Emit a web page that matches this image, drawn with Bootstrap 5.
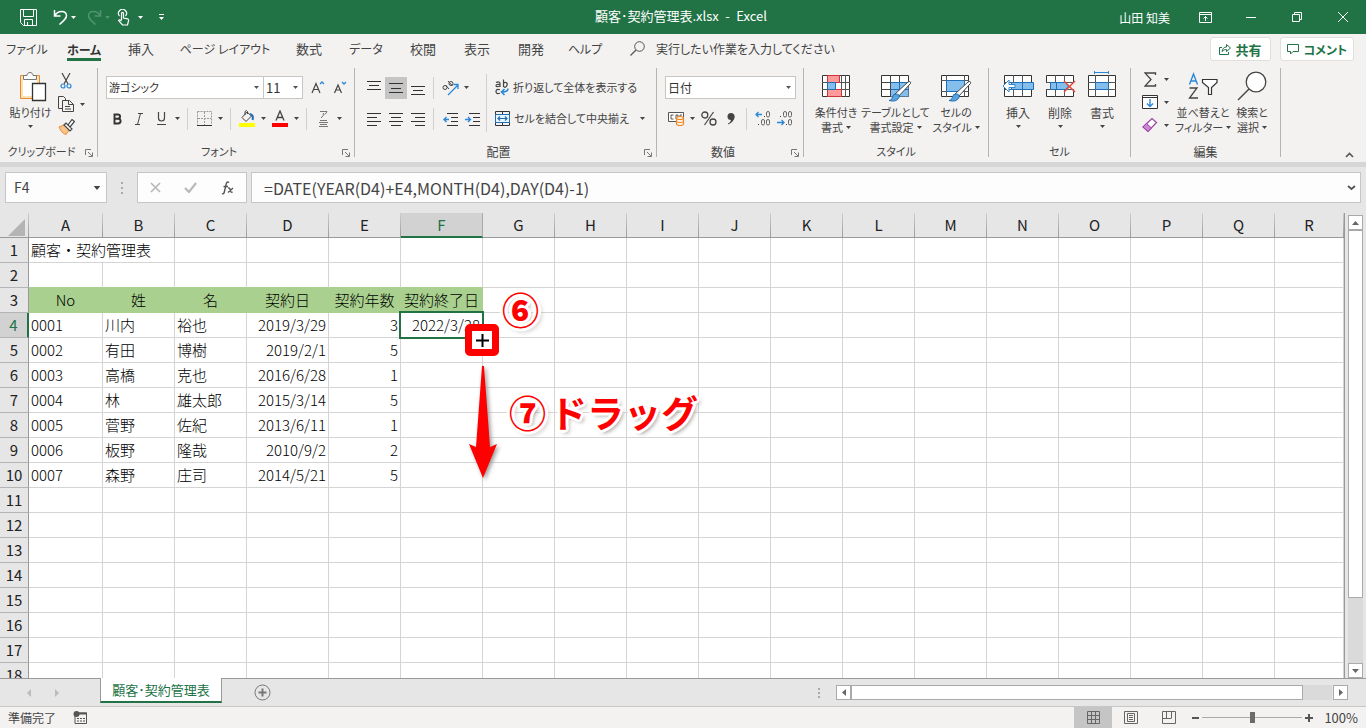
<!DOCTYPE html>
<html lang="ja">
<head>
<meta charset="utf-8">
<meta name="viewport" content="width=device-width, initial-scale=1">
<title>顧客･契約管理表.xlsx - Excel</title>
<link rel="stylesheet" href="https://cdn.jsdelivr.net/npm/bootstrap@5.3.0/dist/css/bootstrap.min.css">
<style>
:root { --xl: #217346; --ink: #444; --line: #d4d4d4; --edge: #999; --pane: #e6e6e6; --chrome: #f3f2f1; }
body { font-family: "Noto Sans CJK JP", sans-serif; font-size: 12px; line-height: 15px; color: var(--ink); font-feature-settings: "palt"; background: var(--pane); }
button, input, select { font: inherit; color: inherit; font-feature-settings: inherit; }
button { border: 0; background: none; padding: 0; }
svg { display: block; flex: none; fill: none; }
a { color: inherit; text-decoration: none; }

.titlebar { display: grid; grid-template-columns: 1fr auto 1fr; height: 34px; flex: none; background: var(--xl); color: #fff; }
.titlebar .win { width: 46px; height: 34px; display: grid; place-items: center; }
.titlebar .quick { padding-left: 20px; }
.file-title { font-size: 13px; margin-right: 4px; line-height: 32px; height: 34px; }

.tabs { height: 32px; flex: none; background: var(--chrome); font-size: 13px; }
.tabs .tab { width: 54px; height: 28px; display: flex; justify-content: center; align-items: center; white-space: nowrap; }
.tabs .tab.mid { width: 60px; }
.tabs .tab.wide { width: 114px; }
.tabs .kana { font-size: 12px; }
.tabs .tab.on { font-weight: 700; color: #333; }
.tabs .tab.on span { border-bottom: 3px solid var(--xl); padding: 3px 0 1px; margin-top: 4px; }
.tell { font-size: 12px; gap: 11px; margin-left: 18px; height: 28px; }
.pill { height: 24px; margin-top: 3px; background: #fff; border: 1px solid #e1dfdd; border-radius: 3px; color: var(--xl); font-weight: 700; font-size: 13px; display: flex; align-items: center; gap: 5px; padding: 0 8px; }
.pill.last { font-size: 12px; margin: 3px 12px 0 9px; padding: 0 6px; }

.ribbon { height: 96px; flex: none; background: var(--chrome); padding-top: 2px; }
.rgroup { height: 89px; border-right: 1px solid #b4b4b4; display: flex; flex-direction: column; flex: none; }
.rgroup .body { flex: 1; display: flex; }
.rgroup footer { height: 16px; display: flex; justify-content: center; align-items: center; position: relative; margin-bottom: -2px; padding-right: 14px; }
.rgroup footer button { position: absolute; right: 4px; bottom: 2px; }
.rgroup footer.plain { padding-right: 0; }
.rgroup .kana { font-size: 11px; }
.g1 { width: 98px; } .g2 { width: 257px; } .g3 { width: 302px; } .g4 { width: 147px; } .g5 { width: 185px; } .g6 { width: 142px; } .g7 { width: 150px; }
.rows { padding: 8px 0 0 8px; white-space: nowrap; }
.toolrow { display: flex; align-items: center; height: 23px; }
.toolrow + .toolrow { margin-top: 8px; }
.tool { width: 22px; height: 22px; display: grid; place-items: center; }
.tool.on { background: #c5c5c5; }
.drop { width: 11px; height: 22px; display: grid; place-items: center; }
.split { width: 1px; height: 22px; background: #d0d0d0; margin: 0 5px 0 4px; }
.split.tall { height: 58px; margin: 6px 8px 0 3px; }
.pick { height: 23px; border: 1px solid #c6c6c6; border-radius: 0; appearance: none; padding: 0 14px 0 2px; color: #333; background: #fff url("data:image/svg+xml,%3Csvg xmlns='http://www.w3.org/2000/svg' width='5' height='3'%3E%3Cpath d='M0 0h5L2.500 3z' fill='%23555'/%3E%3C/svg%3E") no-repeat right 4px center; }
.pick.name { width: 158px; font-size: 11px; } .pick.size { width: 40px; margin-left: -1px; font-size: 13px; } .pick.fmt { width: 131px; }
.big { display: flex; flex-direction: column; align-items: center; padding-top: 3px; white-space: nowrap; }
.big svg.art { margin-bottom: 3px; }
.big .cap { line-height: 15px; display: flex; align-items: center; gap: 3px; }
.big > svg:last-child { margin-top: 5px; }
.w-paste { width: 45px; } .w-cell { width: 42px; } .w-find { width: 44px; } .w-sort { width: 54px; } .w-cond { width: 56px; } .w-style { width: 58px; } .w-table { width: 63px; }
.side { display: flex; flex-direction: column; gap: 1px; }
.side > div { display: flex; height: 22px; align-items: center; }
.g1 .side { padding: 2px 0 0 2px; }

.formula { border-top: 5px solid #d6d6d6; padding: 5px 5px 10px; gap: 4px; height: 51px; }
.fbox { height: 31px; border: 1px solid #c6c6c6; background: #fdfdfd; display: flex; align-items: center; }
.fbox input { border: 0; background: none; outline: 0; min-width: 0; font-size: 16px; color: var(--ink); font-feature-settings: normal; padding: 0; }
.fbox.namebox input { font-size: 14px; }
.namebox { width: 102px; flex: none; } .fxbox { width: 110px; flex: none; }

.sheet { min-height: 0; overflow: hidden; border-right: 1px solid var(--edge); }
.cells { table-layout: fixed; width: 100%; border-collapse: separate; border-spacing: 0; font-size: 15px; line-height: 24px; color: #000; font-feature-settings: normal; }
.cells th { background: var(--pane); font-weight: 400; text-align: center; padding: 0; color: #222; }
.cells thead th { height: 25px; border-bottom: 1px solid var(--edge); border-right: 1px solid; border-image: linear-gradient(#d0d0d0, #999) 1; border-top: 0; border-left: 0; }
.cells tbody th { height: 25px; border-right: 1px solid var(--edge); border-bottom: 1px solid #b4b4b4; }
.cells thead th.on { background: #d2d2d2; color: var(--xl); border-image: none; border-right-color: #aaa; border-bottom: 2px solid var(--xl); line-height: 23px; }
.cells tbody th.on { background: #d2d2d2; color: var(--xl); border-right: 2px solid var(--xl); }
.cells td { height: 25px; padding: 0 2px; background: #fff; border-right: 1px solid var(--line); border-bottom: 1px solid var(--line); white-space: nowrap; font-weight: 300; }
.cells td.hd { background: #a9d08e; border-color: #a9d08e; text-align: center; padding: 0; }
.cells td.above { border-bottom-color: #a9d08e; }
.cells td.num { text-align: right; }
.cells td.active { position: relative; }
.cells td.active::before { content: ""; position: absolute; inset: -2px; border: 2px solid var(--xl); pointer-events: none; }
.corner { width: 17px; height: 17px; margin: 4px 0 0 8px; }

.note { position: absolute; z-index: 2; color: #f00; font-weight: 700; line-height: 40px; font-size: 37px; text-shadow: 3px 0 #fff, -3px 0 #fff, 0 3px #fff, 0 -3px #fff, 2px 2px #fff, -2px 2px #fff, 2px -2px #fff, -2px -2px #fff, 3px 3px 4px #999; font-feature-settings: normal; }
.note.six { left: 101px; top: -24px; font-weight: 900; }
.note.seven { left: 108px; top: 79px; display: flex; gap: 4px; }
.note.seven b { font-weight: 900; }
.grip { position: absolute; z-index: 2; left: 64px; top: 11px; width: 34px; height: 32px; border: 7px solid #f00; border-radius: 5px; background: #fff; display: grid; place-items: center; }
.arrow { position: absolute; z-index: 2; left: 64px; top: 51px; filter: drop-shadow(2px 2px 2px #999); }

.vbar { width: 21px; padding: 2px 3px 0 3px; }
.sbtn { width: 15px; height: 15px; border: 1px solid #aaa; background: #fff; display: grid; place-items: center; flex: none; }
.vtrack { background: #dadada; min-height: 0; }
.vthumb { height: 85%; background: #fff; border: 1px solid #aaa; }
.sheetbar { height: 28px; border-top: 1px solid var(--edge); background: var(--pane); flex: none; }
.sheetbar .arrows { width: 100px; padding-left: 27px; gap: 23px; height: 27px; }
.sheettab { height: 25px; margin-top: -1px; width: 122px; background: #fff; border: 1px solid var(--edge); border-top: 0; border-bottom: 2px solid var(--xl); color: var(--xl); font-size: 13px; }
.hbar { width: 512px; margin-right: 18px; }
.htrack { background: #dadada; height: 15px; margin-right: 1px; }
.hthumb { width: 94%; height: 15px; background: #fff; border: 1px solid #aaa; }
.status { height: 22px; background: var(--chrome); border-top: 1px solid #c6c6c6; flex: none; }
.view { width: 38px; height: 21px; display: grid; place-items: center; }
.view.on { background: #c5c5c5; }
.zoomer { appearance: none; width: 100px; height: 20px; background: linear-gradient(#aaa, #aaa) center / 100% 1px no-repeat; margin: 0 3px; }
.zoomer::-webkit-slider-thumb { appearance: none; width: 5px; height: 11px; background: #6b6b6b; }
.percent { font-size: 13px; margin: 0 8px 0 11px; }
</style>
</head>
<body>
<svg width="0" height="0" class="position-absolute" aria-hidden="true">
  <symbol id="caret" viewBox="0 0 5 3"><path d="M0 0h5L2.500 3z" fill="currentColor"/></symbol>
  <symbol id="launch" viewBox="0 0 8 8"><path d="M.5 6V.5H6M3 3l4 4M7.500 3.500v4h-4" stroke="#777"/></symbol>
</svg>
<div class="vh-100 d-flex flex-column overflow-hidden">

<header class="titlebar align-items-center">
  <div class="quick d-flex align-items-center">
    <button aria-label="上書き保存"><svg width="17" height="17"><path d="M.5.500h16v16H3.500l-3-3zM3.500.500v7h10v-7M4.500 16v-5.500h8V16M7.500 13v3" stroke="#fff"/></svg></button>
    <button class="ms-3" aria-label="元に戻す"><svg width="15" height="16"><path d="M1.500 1v6h6M1.500 7C5 1 13 1 13.500 6.500c0 3-2 4.500-7 9" stroke="#fff" stroke-width="1.500"/></svg></button>
    <button class="drop"><svg width="5" height="3"><use href="#caret"/></svg></button>
    <button class="ms-2" aria-label="やり直し"><svg width="15" height="16"><path d="M13.500 1v6h-6M13.500 7C10 1 2 1 1.500 6.500c0 3 2 4.500 7 9" stroke="#4f9470" stroke-width="1.500"/></svg></button>
    <button class="drop" style="color:#4f9470"><svg width="5" height="3"><use href="#caret"/></svg></button>
    <button class="ms-1" aria-label="タッチ/マウス モードの切り替え"><svg width="14" height="17"><path d="M2.500 7a4 4 0 1 1 6 0M4.500 11V4.500c0-1.500 2-1.500 2 0V9l4 .8q1.500.5 1 2.200l-1 4h-5L1.500 11.500q1-1.500 3 .5" stroke="#fff" stroke-width="1.200"/></svg></button>
    <button class="drop ms-1"><svg width="5" height="3"><use href="#caret"/></svg></button>
    <button class="ms-2 ps-1" aria-label="クイック アクセス ツール バーのカスタマイズ"><svg width="7" height="6"><path d="M1 .5h5" stroke="#fff"/><path d="M1 3h5L3.500 6z" fill="#fff"/></svg></button>
  </div>
  <div class="file-title">顧客･契約管理表.xlsx&ensp;-&ensp;Excel</div>
  <div class="d-flex justify-content-end align-items-center">
    <span class="me-2 pe-1">山田 知美</span>
    <button class="win" aria-label="リボンの表示オプション"><svg width="13" height="11"><path d="M.5.500h12v10H.5zM.5 2.500h12M6.500 9V4.500M4.500 6.500l2-2 2 2" stroke="#fff"/></svg></button>
    <button class="win" aria-label="最小化"><svg width="10" height="1"><path d="M0 .5h10" stroke="#fff"/></svg></button>
    <button class="win" aria-label="元に戻す (縮小)"><svg width="10" height="10"><path d="M.5 2.500h7v7h-7zM2.500 2.500v-2h7v7h-2" stroke="#fff"/></svg></button>
    <button class="win" aria-label="閉じる"><svg width="10" height="10"><path d="M0 0l10 10M10 0L0 10" stroke="#fff"/></svg></button>
  </div>
</header>

<nav class="tabs d-flex align-items-start">
  <a href="#" class="tab kana">ファイル</a>
  <a href="#" class="tab mid kana on"><span>ホーム</span></a>
  <a href="#" class="tab">挿入</a>
  <a href="#" class="tab wide kana">ページ レイアウト</a>
  <a href="#" class="tab">数式</a>
  <a href="#" class="tab mid kana">データ</a>
  <a href="#" class="tab">校閲</a>
  <a href="#" class="tab">表示</a>
  <a href="#" class="tab">開発</a>
  <a href="#" class="tab kana">ヘルプ</a>
  <a href="#" class="tell d-flex align-items-center"><svg width="15" height="15"><circle cx="9.500" cy="5.500" r="4.800" stroke="#555"/><path d="M6 9l-5.500 5.500" stroke="#555" stroke-width="1.200"/></svg>実行したい作業を入力してください</a>
  <button class="pill ms-auto"><svg width="12" height="12"><path d="M3 4.500H.5v7h9V9M3 8.500c.5-3 2-4.500 4.500-4.500V1.500l4 3.500-4 3.500V6.500c-2 0-3 .5-4.500 2z" stroke="#217346"/></svg>共有</button>
  <button class="pill last"><svg width="12" height="11"><path d="M.5.500h11v7H6L3.500 10V7.500h-3z" stroke="#217346"/></svg>コメント</button>
</nav>

<div class="ribbon d-flex position-relative">
  <section class="rgroup g1">
    <div class="body ps-2">
      <button class="big w-paste kana"><svg class="art ms-1" width="28" height="31"><path d="M1.500 4.500h19v23h-19z" fill="#fbe2b5" stroke="#ea8a2a"/><path d="M4 7h14v18H4z" fill="#fff"/><path d="M4.500 8.500v-4h3.500c0-4 6-4 6 0h3.500v4z" fill="#fafafa" stroke="#777"/><path d="M13.500 12.500h13v17h-13z" fill="#fff" stroke="#333" stroke-width="1.300"/></svg>貼り付け<svg width="5" height="3"><use href="#caret"/></svg></button>
      <div class="side">
        <div><button class="tool" aria-label="切り取り"><svg width="12" height="16"><path d="M2 0l6 11M10 0L4 11" stroke="#444" stroke-width="1.200"/><circle cx="3" cy="13" r="2" stroke="#2b88d8" stroke-width="1.200"/><circle cx="9" cy="13" r="2" stroke="#2b88d8" stroke-width="1.200"/></svg></button></div>
        <div><button class="tool" aria-label="コピー"><svg width="16" height="16"><path d="M4.500 12.500h-4V.5h5l2 2v2M4.500 4.500h7l4 4v7h-11zM10.500 4.500v4h5M7 10.500h5M7 13h6" stroke="#444"/></svg></button><button class="drop"><svg width="5" height="3"><use href="#caret"/></svg></button></div>
        <div><button class="tool" aria-label="書式のコピー/貼り付け"><svg width="17" height="16"><path d="M1 8l5-2 5 5-3 4.500c-3-1-5-3-7-7.500z" fill="#f9c58a" stroke="#ea8a2a"/><path d="M6 6l2-2 6 6-2 2zM10 6l4-5.500 2.500 2L12 8" fill="#fff" stroke="#444" stroke-width="1.200"/></svg></button></div>
      </div>
    </div>
    <footer class="kana">クリップボード<button aria-label="クリップボードの詳細"><svg width="8" height="8"><use href="#launch"/></svg></button></footer>
  </section>

  <section class="rgroup g2">
    <div class="body rows d-block">
      <div class="toolrow">
        <select class="pick name" aria-label="フォント"><option>游ゴシック</option></select><select class="pick size" aria-label="フォント サイズ"><option>11</option></select>
        <button class="tool ms-1" aria-label="フォント サイズの拡大"><svg width="14" height="15"><path d="M1 13L5 3.500 9 13M2.500 9.500h5" stroke="#444" stroke-width="1.200"/><path d="M9 4l2-2 2 2" stroke="#2b88d8" stroke-width="1.300"/></svg></button>
        <button class="tool" aria-label="フォント サイズの縮小"><svg width="14" height="15"><path d="M1.500 13L5 5l3.500 8M3 10h4" stroke="#444" stroke-width="1.200"/><path d="M9 2l2 2 2-2" stroke="#2b88d8" stroke-width="1.300"/></svg></button>
      </div>
      <div class="toolrow">
        <button class="tool" aria-label="太字"><svg width="9" height="12"><path d="M1.500 1.500h3c3.500 0 3.500 4.200 0 4.200h-3 3.500c3.500 0 3.500 4.800 0 4.800H1.500z" stroke="#333" stroke-width="1.900"/></svg></button>
        <button class="tool" aria-label="斜体"><svg width="8" height="12"><path d="M3 .5h5M0 11.500h5M5.500.500l-3 11" stroke="#444"/></svg></button>
        <button class="tool" aria-label="下線"><svg width="9" height="13"><path d="M1.500 0v6c0 4 6 4 6 0V0M0 12.500h9" stroke="#444" stroke-width="1.200"/></svg></button>
        <button class="drop"><svg width="5" height="3"><use href="#caret"/></svg></button><i class="split"></i>
        <button class="tool" aria-label="罫線"><svg width="15" height="15"><path d="M.5.500h14v13M.5.500v13M7.500 1v13M1 7.500h13" stroke="#999" stroke-dasharray="2 1"/><path d="M0 14.500h15" stroke="#333"/></svg></button>
        <button class="drop"><svg width="5" height="3"><use href="#caret"/></svg></button><i class="split"></i>
        <button class="tool" aria-label="塗りつぶしの色"><svg width="16" height="17"><path d="M8 2L3 7.500l4 4 5.500-5.500zM6 5V1.500q1.500-2 2.500 0V4" stroke="#444"/><path d="M11 4q4 1 2.500 6" stroke="#1e6fb8" stroke-width="2"/><path d="M0 13h16v4H0z" fill="#ff0"/></svg></button>
        <button class="drop"><svg width="5" height="3"><use href="#caret"/></svg></button>
        <button class="tool" aria-label="フォントの色"><svg width="16" height="17"><path d="M4 10.500L8 1l4 9.500M5.500 7.500h5" stroke="#444" stroke-width="1.300"/><path d="M0 13h16v4H0z" fill="red"/></svg></button>
        <button class="drop"><svg width="5" height="3"><use href="#caret"/></svg></button><i class="split"></i>
        <button class="tool" aria-label="ふりがなの表示"><svg width="9" height="17"><path d="M1 1.500h7q-.5 2-2.500 3M4.500 3q.5 3-2.500 5M1 10.500h7M0 12.500h9M1 14.500h7M0 16.500h9" stroke="#777"/></svg></button>
        <button class="drop"><svg width="5" height="3"><use href="#caret"/></svg></button>
      </div>
    </div>
    <footer class="kana">フォント<button aria-label="フォントの詳細"><svg width="8" height="8"><use href="#launch"/></svg></button></footer>
  </section>

  <section class="rgroup g3">
    <div class="body">
      <div class="rows">
        <div class="toolrow">
          <button class="tool" aria-label="上揃え"><svg width="14" height="16"><path d="M0 1.500h14M2 5.500h10M0 9.500h14" stroke="#333"/></svg></button>
          <button class="tool on" aria-label="上下中央揃え"><svg width="14" height="16"><path d="M0 3.500h14M2 8.500h10M0 12.500h14" stroke="#333"/></svg></button>
          <button class="tool" aria-label="下揃え"><svg width="14" height="16"><path d="M0 6.500h14M2 10.500h10M0 14.500h14" stroke="#333"/></svg></button>
          <i class="split"></i>
          <button class="tool" aria-label="方向"><svg width="17" height="16"><circle cx="3" cy="7.500" r="2" stroke="#444"/><path d="M3.500 5l3.500 4M6 1l4.500 5" stroke="#444"/><circle cx="9" cy="3.500" r="2" stroke="#444"/><path d="M6 15l10-10M11.500 4.500H16V9" stroke="#2b88d8" stroke-width="1.300"/></svg></button>
          <button class="drop"><svg width="5" height="3"><use href="#caret"/></svg></button>
        </div>
        <div class="toolrow">
          <button class="tool" aria-label="左揃え"><svg width="14" height="14"><path d="M0 1.500h14M0 5.500h10M0 9.500h14M0 13.500h10" stroke="#333"/></svg></button>
          <button class="tool" aria-label="中央揃え"><svg width="14" height="14"><path d="M0 1.500h14M2 5.500h10M0 9.500h14M2 13.500h10" stroke="#333"/></svg></button>
          <button class="tool" aria-label="右揃え"><svg width="14" height="14"><path d="M0 1.500h14M4 5.500h10M0 9.500h14M4 13.500h10" stroke="#333"/></svg></button>
          <i class="split"></i>
          <button class="tool" aria-label="インデントを減らす"><svg width="15" height="14"><path d="M4 1.500h11M8 5.500h7M8 9.500h7M4 13.500h11" stroke="#333"/><path d="M6 7.500H1M3.500 5L1 7.500 3.500 10" stroke="#2b88d8" stroke-width="1.400"/></svg></button>
          <button class="tool" aria-label="インデントを増やす"><svg width="15" height="14"><path d="M4 1.500h11M8 5.500h7M8 9.500h7M4 13.500h11" stroke="#333"/><path d="M0 7.500h5M3 5l2.500 2.500L3 10" stroke="#2b88d8" stroke-width="1.400"/></svg></button>
        </div>
      </div>
      <i class="split tall"></i>
      <div class="rows ps-0 kana">
        <button class="toolrow"><svg class="me-1" width="14" height="17"><path d="M1 3.500q4-1.500 4 1V8M5 5.500q-4-.5-4 1.200t4 .3M8.500.500V8M8.500 4.500q1.500-2 3-.8t0 3.500-3 0M5 10.800q-4-1.300-4 1.700t4 1.700" stroke="#444" stroke-width="1.200"/><path d="M13 9.500q0 3.500-6 3.500M9.500 10L6.500 13l3 3" stroke="#2b88d8" stroke-width="1.600"/></svg>折り返して全体を表示する</button>
        <div class="toolrow"><button class="d-flex align-items-center"><svg class="me-1" width="15" height="15"><path d="M.5.500h14v14H.5zM7.500 0v4M7.500 11v4" stroke="#333"/><path d="M.5 3.500h14v8H.5z" fill="#e8f3fc" stroke="#1e6fb8"/><path d="M3 7.500h9M5 5.500l-2 2 2 2M10 5.500l2 2-2 2" stroke="#1e6fb8" stroke-width="1.200"/></svg>セルを結合して中央揃え</button><button class="drop ms-2"><svg width="5" height="3"><use href="#caret"/></svg></button></div>
      </div>
    </div>
    <footer>配置<button aria-label="配置の詳細"><svg width="8" height="8"><use href="#launch"/></svg></button></footer>
  </section>

  <section class="rgroup g4">
    <div class="body rows d-block">
      <div class="toolrow"><select class="pick fmt" aria-label="表示形式"><option>日付</option></select></div>
      <div class="toolrow">
        <button class="tool" aria-label="通貨表示形式"><svg width="17" height="15"><path d="M.5 1.500h15v9H.5z" fill="#fff" stroke="#555"/><path d="M5.500 4H3v4h2.500M8 8V4h2v4M12 8V4h2" stroke="#555"/><path d="M8.500 7v6c0 2 7 2 7 0V7" fill="#fdeede" stroke="#ea8a2a" stroke-width="1.200"/><ellipse cx="12" cy="7" rx="3.500" ry="1.500" fill="#fdeede" stroke="#ea8a2a" stroke-width="1.200"/><path d="M8.500 10c0 2 7 2 7 0" stroke="#ea8a2a"/></svg></button>
        <button class="drop"><svg width="5" height="3"><use href="#caret"/></svg></button>
        <button class="tool" aria-label="パーセント スタイル"><svg width="16" height="15"><circle cx="3.800" cy="4" r="3" stroke="#444" stroke-width="1.300"/><circle cx="12" cy="11" r="3" stroke="#444" stroke-width="1.300"/><path d="M12.500 1l-9 13" stroke="#444" stroke-width="1.200"/></svg></button>
        <button class="tool" aria-label="桁区切りスタイル"><svg width="8" height="12"><circle cx="4" cy="3.500" r="3.500" fill="#444"/><path d="M7.500 3q0 6-6.500 8.500v-1q3-1.500 3-4.500z" fill="#444"/></svg></button>
        <i class="split"></i>
        <button class="tool" aria-label="小数点以下の表示桁数を増やす"><svg width="16" height="15"><path d="M7 3.500H1M3.500 1L1 3.500 3.500 6" stroke="#2b88d8" stroke-width="1.300"/><rect x="11.500" y=".5" width="3" height="5.500" rx="1.500" stroke="#666"/><rect x="6.500" y="8.500" width="3" height="5.500" rx="1.500" stroke="#666"/><rect x="11.500" y="8.500" width="3" height="5.500" rx="1.500" stroke="#666"/><path d="M9 5.500h1M3 13.500h1" stroke="#444"/></svg></button>
        <button class="tool" aria-label="小数点以下の表示桁数を減らす"><svg width="16" height="15"><path d="M0 11.500h7M4.500 9L7 11.500 4.500 14" stroke="#2b88d8" stroke-width="1.300"/><rect x="6.500" y=".5" width="3" height="5.500" rx="1.500" stroke="#666"/><rect x="11.500" y=".5" width="3" height="5.500" rx="1.500" stroke="#666"/><rect x="11.500" y="8.500" width="3" height="5.500" rx="1.500" stroke="#666"/><path d="M3 5.500h1M9 13.500h1" stroke="#444"/></svg></button>
      </div>
    </div>
    <footer>数値<button aria-label="数値の詳細"><svg width="8" height="8"><use href="#launch"/></svg></button></footer>
  </section>

  <section class="rgroup g5">
    <div class="body ps-1 kana">
      <button class="big w-cond"><svg class="art" width="30" height="31"><path d="M1.500 4.500h27v21h-27z" fill="#fff" stroke="#333"/><path d="M1 11.500h28M1 18.500h28M20.500 4v22M24.500 4v22" stroke="#555"/><path d="M6.500 4.500h12v7h-12zM6.500 18.500h14v7h-14z" fill="#ff9a9a" stroke="#d13438"/><path d="M6.500 11.500h8v7h-8z" fill="#83beec" stroke="#1e6fb8"/></svg>条件付き<span class="cap">書式 <svg width="5" height="3"><use href="#caret"/></svg></span></button>
      <button class="big w-table"><svg class="art" width="32" height="31"><path d="M1.500 4.500h27v21h-27z" fill="#fff" stroke="#333"/><path d="M10.500 11.500h18v14h-18z" fill="#83beec"/><path d="M1 11.500h28M1 18.500h28M10.500 4v22M19.500 4v22" stroke="#444"/><path d="M10.500 11.500h18M10.500 18.500h18M19.500 11v15" stroke="#1e6fb8"/><path d="M15 23L28 11q3-1.500 2.500 1.500L18 26z" fill="#fff" stroke="#444"/><path d="M9 29.500q3 0 3.500-3.500t4-3 2.500 3.500q-2.500 5-10 3z" fill="#5ba3dc" stroke="#1e6fb8"/></svg>テーブルとして<span class="cap">書式設定 <svg width="5" height="3"><use href="#caret"/></svg></span></button>
      <button class="big w-style"><svg class="art" width="32" height="31"><path d="M1.500 4.500h27v21h-27z" fill="#fff" stroke="#333"/><path d="M1 9.500h28M6.500 4v22M1 20.500h28M24.500 4v22" stroke="#555"/><path d="M6.500 9.500h18v11h-18z" fill="#83beec" stroke="#1e6fb8"/><path d="M15 23L28 11q3-1.500 2.500 1.500L18 26z" fill="#fff" stroke="#444"/><path d="M9 29.500q3 0 3.500-3.500t4-3 2.500 3.500q-2.500 5-10 3z" fill="#5ba3dc" stroke="#1e6fb8"/></svg>セルの<span class="cap">スタイル <svg width="5" height="3"><use href="#caret"/></svg></span></button>
    </div>
    <footer class="plain kana">スタイル</footer>
  </section>

  <section class="rgroup g6">
    <div class="body ps-2">
      <button class="big w-cell"><svg class="art" width="32" height="31"><path d="M2.500 4.500h27v21h-27z" fill="#fff" stroke="#333"/><path d="M2 11.500h28M2 18.500h28M11.500 4v22M20.500 4v22" stroke="#555"/><path d="M9.500 11.500h22v7h-22z" fill="#83beec" stroke="#1e6fb8"/><path d="M20.500 12v6" stroke="#1e6fb8"/><path d="M7 9L1 15l6 6v-4.500h6v-3H7z" fill="#fff" stroke="#2b88d8"/></svg>挿入<svg width="5" height="3"><use href="#caret"/></svg></button>
      <button class="big w-cell"><svg class="art" width="32" height="31"><path d="M2.500 4.500h27v21h-27z" fill="#fff" stroke="#333"/><path d="M2 11.500h28M2 18.500h28M11.500 4v22M20.500 4v22" stroke="#555"/><path d="M0 12h6v6H0z" fill="#f3f2f1"/><path d="M6.500 11.500h15l3 3.500-3 3.500h-15z" fill="#83beec" stroke="#1e6fb8"/><path d="M12.500 12v6" stroke="#1e6fb8"/><path d="M26 12h5v6h-5z" fill="#f3f2f1"/><path d="M20 10l11 11M31 10L20 21" stroke="#e84b3c" stroke-width="1.500"/></svg>削除<svg width="5" height="3"><use href="#caret"/></svg></button>
      <button class="big w-cell"><svg class="art" width="30" height="31"><path d="M1.500 4.500h27v21h-27z" fill="#fff" stroke="#333"/><path d="M1 11.500h28M1 18.500h28M8.500 4v22M21.500 4v22" stroke="#555"/><path d="M8.500 11.500h13v7h-13z" fill="#83beec" stroke="#1e6fb8"/><path d="M7 1.500h15M7.500 0v3M21.500 0v3" stroke="#2b88d8"/></svg>書式<svg width="5" height="3"><use href="#caret"/></svg></button>
    </div>
    <footer class="plain kana">セル</footer>
  </section>

  <section class="rgroup g7">
    <div class="body ps-2">
      <div class="side">
        <div><button class="tool" aria-label="オート SUM"><svg width="13" height="15"><path d="M11.500 3V1H1l6 6.500L1 14h10.500v-2" stroke="#444" stroke-width="1.300"/></svg></button><button class="drop"><svg width="5" height="3"><use href="#caret"/></svg></button></div>
        <div><button class="tool" aria-label="フィル"><svg width="16" height="14"><path d="M.5.500h15v13H.5zM0 2.500h16" fill="#fff" stroke="#333"/><path d="M8 4v7M5 8.500l3 3 3-3" stroke="#2b88d8" stroke-width="1.400"/></svg></button><button class="drop"><svg width="5" height="3"><use href="#caret"/></svg></button></div>
        <div><button class="tool" aria-label="クリア"><svg width="16" height="16"><path d="M1 10l9-8.500 4.500 4L6 14.500z" fill="#fff" stroke="#9b3fa5" stroke-width="1.200"/><path d="M1 10l3.500-3.500 5 4.500L6 14.500z" fill="#c987d1" stroke="#9b3fa5"/></svg></button><button class="drop"><svg width="5" height="3"><use href="#caret"/></svg></button></div>
      </div>
      <button class="big w-sort kana ms-1"><svg class="art" width="30" height="31"><path d="M1.500 13.500L5.500 3l4 10.500M3 10h5" stroke="#2b88d8" stroke-width="1.400"/><path d="M1.500 17H9L1.500 27H10" stroke="#444" stroke-width="1.300"/><path d="M14.500 8.500h14.500v3l-5.500 5v7h-3v-7l-6-5z" fill="#fff" stroke="#333" stroke-width="1.200"/></svg>並べ替えと<span class="cap">フィルター <svg width="5" height="3"><use href="#caret"/></svg></span></button>
      <button class="big w-find kana"><svg class="art" width="30" height="31"><circle cx="19" cy="11" r="9.800" fill="#fff" stroke="#444" stroke-width="1.300"/><path d="M12 18L1 29" stroke="#444" stroke-width="1.500"/></svg>検索と<span class="cap">選択 <svg width="5" height="3"><use href="#caret"/></svg></span></button>
    </div>
    <footer class="plain">編集</footer>
  </section>
  <button class="position-absolute end-0 bottom-0 me-2 mb-1 pe-1" aria-label="リボンを折りたたむ"><svg width="9" height="6"><path d="M1 5l3.500-3.500L8 5" stroke="#555" stroke-width="1.600"/></svg></button>
</div>

<div class="formula d-flex flex-shrink-0">
  <div class="fbox namebox"><input class="flex-fill w-50 ps-2" value="F4" aria-label="名前ボックス"><button class="drop me-1"><svg width="8" height="4" viewBox="0 0 5 3"><use href="#caret"/></svg></button></div>
  <svg class="mx-1 my-auto" width="14" height="12"><path d="M7 0v2M7 5v2M7 10v2" stroke="#aaa" stroke-width="2"/></svg>
  <div class="fbox fxbox justify-content-around"><button aria-label="キャンセル"><svg width="11" height="11"><path d="M1 1l9 9M10 1L1 10" stroke="#b9b9b9" stroke-width="1.700"/></svg></button><button aria-label="入力"><svg width="13" height="11"><path d="M1 6l4 4 7-9" stroke="#b9b9b9" stroke-width="2.200"/></svg></button><button aria-label="関数の挿入"><svg width="13" height="14"><path d="M8 1.500q-2-1.500-2.800 1.500L3.300 11q-.5 2.500-2.300 1.500M2.500 5.500h4.500M7 7q1.500-.5 2 1.500l.7 2q.5 1 1.800.5M12 7L7 11.500" stroke="#555" stroke-width="1.400"/></svg></button></div>
  <div class="fbox flex-fill"><input class="flex-fill ms-2 ps-1" value="=DATE(YEAR(D4)+E4,MONTH(D4),DAY(D4)-1)" aria-label="数式バー"><button class="me-1" aria-label="数式バーの展開"><svg width="9" height="6"><path d="M1 1l3.500 3L8 1" stroke="#555" stroke-width="1.800"/></svg></button></div>
</div>

<div class="d-flex flex-fill" style="min-height:0">
  <main class="sheet flex-fill">
    <table class="cells">
      <colgroup id="cols"></colgroup>
      <thead><tr id="letters"></tr></thead>
      <tbody id="grid"></tbody>
    </table>
  </main>
  <div class="vbar d-flex flex-column">
    <button class="sbtn" aria-label="上へ"><svg width="7" height="4"><path d="M0 4h7L3.500 0z" fill="#666"/></svg></button>
    <div class="vtrack flex-fill"><div class="vthumb"></div></div>
    <button class="sbtn" aria-label="下へ"><svg width="7" height="4"><path d="M0 0h7L3.500 4z" fill="#666"/></svg></button>
  </div>
</div>

<div class="sheetbar d-flex">
  <div class="arrows d-flex align-items-center"><svg width="5" height="8"><path d="M4 0v8L0 4z" fill="#bbb"/></svg><svg width="5" height="8"><path d="M0 0v8l4-4z" fill="#bbb"/></svg></div>
  <button class="sheettab">顧客･契約管理表</button>
  <button class="ms-4 ps-2" aria-label="新しいシート"><svg width="17" height="17"><circle cx="8.500" cy="8.500" r="7.500" stroke="#777"/><path d="M8.500 4.500v8M4.500 8.500h8" stroke="#777" stroke-width="2"/></svg></button>
  <svg class="ms-auto my-auto me-3" width="2" height="10"><path d="M1 0v2M1 4v2M1 8v2" stroke="#aaa" stroke-width="2"/></svg>
  <div class="hbar d-flex align-items-center">
    <button class="sbtn" aria-label="左へ"><svg width="4" height="7"><path d="M4 0v7L0 3.500z" fill="#666"/></svg></button>
    <div class="htrack flex-fill"><div class="hthumb"></div></div>
    <button class="sbtn" aria-label="右へ"><svg width="4" height="7"><path d="M0 0v7l4-3.500z" fill="#666"/></svg></button>
  </div>
</div>

<footer class="status d-flex align-items-center">
  <span class="ms-2">準備完了</span>
  <svg class="ms-3" width="17" height="13"><path d="M3 3v9.500h11.500V3M6 2h8.500" stroke="#555"/><path d="M7 1.500h8v2H7z" fill="#555"/><circle cx="4.500" cy="3" r="3" fill="#555"/><path d="M5 7.500h8M5 10h8" stroke="#555" stroke-dasharray="2 1"/></svg>
  <button class="view on ms-auto" aria-label="標準"><svg width="13" height="13"><path d="M.5.500h12v12H.5zM4.500 0v13M8.500 0v13M0 4.500h13M0 8.500h13" stroke="#666"/></svg></button>
  <button class="view" aria-label="ページ レイアウト"><svg width="14" height="13"><path d="M.5.500h13v12H.5zM3.500 2.500h7v8h-7zM5 4.500h4M5 6.500h4M5 8.500h4" stroke="#666"/></svg></button>
  <button class="view" aria-label="改ページ プレビュー"><svg width="14" height="13"><path d="M.5.500h13v12H.5zM4.500 0v7M9.500 0v7M0 7.500h9.500" stroke="#666"/></svg></button>
  <button class="ms-1" aria-label="縮小"><svg width="7" height="8"><path d="M0 4h7" stroke="#555" stroke-width="2"/></svg></button>
  <input class="zoomer" type="range" min="10" max="190" value="100" aria-label="ズーム">
  <button aria-label="拡大"><svg width="8" height="8"><path d="M0 4h8M4 0v8" stroke="#555" stroke-width="2"/></svg></button>
  <button class="percent">100%</button>
</footer>
</div>

<template id="callouts">
  <span class="grip"><svg width="13" height="13"><path d="M6.500 0v13M0 6.500h13" stroke="#000" stroke-width="2"/></svg></span>
  <span class="note six">⑥</span>
  <svg class="arrow" width="34" height="118"><path d="M17 2h2l6 81 7-3-14 34L4 80l7 3z" fill="#f00"/></svg>
  <span class="note seven"><b>⑦</b>ドラッグ</span>
</template>

<script>
const widths = [29, 74, 72, 72, 82, 72, 82, ...Array(11).fill(72)];
const letters = 'ABCDEFGHIJKLMNOPQR'.split('');
const rows = {
  1: ['顧客・契約管理表'],
  3: ['No', '姓', '名', '契約日', '契約年数', '契約終了日'],
  4: ['0001', '川内', '裕也', '2019/3/29', '3', '2022/3/28'],
  5: ['0002', '有田', '博樹', '2019/2/1', '5'],
  6: ['0003', '高橋', '克也', '2016/6/28', '1'],
  7: ['0004', '林', '雄太郎', '2015/3/14', '5'],
  8: ['0005', '菅野', '佐紀', '2013/6/11', '1'],
  9: ['0006', '板野', '隆哉', '2010/9/2', '2'],
  10: ['0007', '森野', '庄司', '2014/5/21', '5']
};
document.getElementById('cols').innerHTML = widths.map(w => `<col style="width:${w}px">`).join('') + '<col>';
document.getElementById('letters').innerHTML =
  '<th><svg class="corner" viewBox="0 0 17 17"><path d="M17 0v17H0z" fill="#b4b4b4"/></svg></th>' +
  letters.map(l => `<th scope="col" class="${l === 'F' ? 'on' : ''}">${l}</th>`).join('');
let html = '';
for (let r = 1; r <= 18; r++) {
  html += `<tr><th scope="row" class="${r === 4 ? 'on' : ''}">${r}</th>`;
  for (let c = 0; c < 18; c++) {
    if (r === 1 && c === 1) continue;
    const cls = [];
    if (r === 3 && c < 6) cls.push('hd');
    if (r === 2 && c < 6) cls.push('above');
    if (r > 3 && c > 2) cls.push('num');
    if (r === 4 && c === 5) cls.push('active');
    html += `<td${r === 1 && c === 0 ? ' colspan="2"' : ''} class="${cls.join(' ')}">${(rows[r] || [])[c] || ''}</td>`;
  }
  html += '</tr>';
}
document.getElementById('grid').innerHTML = html;
document.querySelector('.active').append(document.getElementById('callouts').content);
</script>
<script src="https://cdn.jsdelivr.net/npm/bootstrap@5.3.0/dist/js/bootstrap.bundle.min.js"></script>
</body>
</html>
